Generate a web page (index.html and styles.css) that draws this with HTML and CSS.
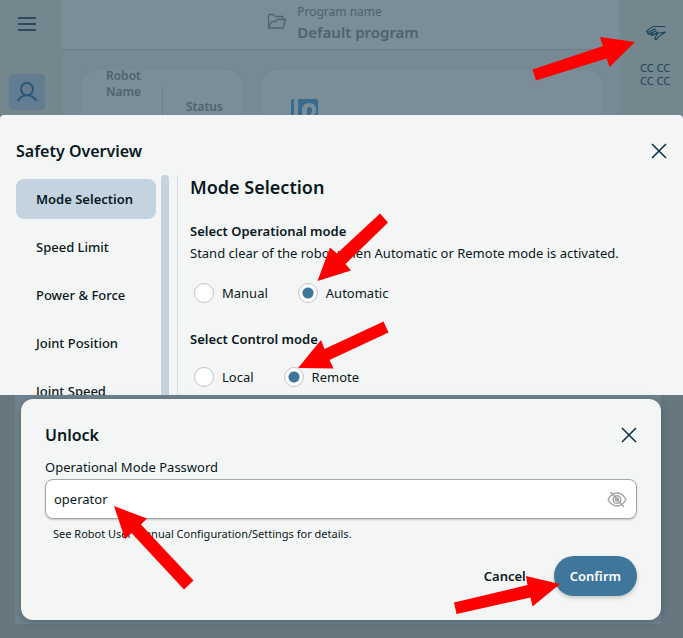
FILE: index.html
```html
<!DOCTYPE html>
<html lang="en">
<head>
  <meta charset="UTF-8">
  <title>Safety Overview</title>
  <meta name="viewport" content="width=device-width, initial-scale=1.0">
  <link rel="stylesheet" href="styles.css">
</head>
<body>
  <div class="page">
    <!-- Dimmed application -->
    <div class="app">
      <nav class="sidebar">
        <button class="icon-button" aria-label="Menu">
          <svg width="20" height="16" viewBox="0 0 20 16"><path d="M1 2h18M1 8h18M1 14h18" stroke="#2a4c5e" stroke-width="2" fill="none"/></svg>
        </button>
        <button class="icon-button user-button" aria-label="Operator">
          <svg width="22" height="20" viewBox="0 0 22 20"><g stroke="#2a5675" stroke-width="2" fill="none"><ellipse cx="11" cy="7" rx="6" ry="6.2"/><path d="M1.500 19C4 15 7 13.300 11 13.300S18 15 20.500 19"/></g></svg>
        </button>
      </nav>

      <div class="main">
        <header class="program">
          <svg class="folder" width="20" height="17" viewBox="0 0 20 17"><path d="M1.500 15V2.500l1-1h4l2 2h7.500v3M1.500 15l3-6.500h4l2-2h8l-2.500 8.500z" stroke="#4f636f" stroke-width="1.300" fill="none" stroke-linejoin="round"/></svg>
          <div>
            <div class="program-label">Program name</div>
            <div class="program-name">Default program</div>
          </div>
        </header>
        <div class="cards">
          <div class="card robot-card">
            <div class="robot-name">Robot Name</div>
            <div class="robot-status">Status</div>
          </div>
          <div class="card logo-card">
            <svg width="28" height="28" viewBox="0 0 28 28"><path d="M3 0h1v28H1V2Q1 0 3 0zM8 0h18q2 0 2 2v26H8z" fill="#376b8f"/><path d="M12 28V12q0-8 7-8t7 7q0 6-6 8v9" fill="#7b8d98"/><path d="M17 28V12q0-4 2.500-4t2.500 3q0 4-3 5v12z" fill="#376b8f"/></svg>
          </div>
        </div>
      </div>

      <aside class="tools">
        <button class="icon-button" aria-label="Freedrive">
          <svg width="22" height="16" viewBox="0 0 22 16"><path d="M20.500 1.500H9.500C6 2 3.500 4 1.500 6.500L3 7.500C6 6.500 7.500 4 11 4M3 7.500V9C6 9 8 7 11.500 5.500M5.500 9.500L7 10.500C9.500 9.500 11 8.500 12.500 7C12.500 10 9.500 12 10 14.500H11.500C13.500 12 14.500 10 17 9.500L20.500 7Z" stroke="#1e4457" stroke-width="1.200" fill="none" stroke-linejoin="round"/></svg>
        </button>
        <div class="checksum">CC CC CC CC</div>
      </aside>
    </div>

    <!-- Safety overview dialog -->
    <section class="safety">
      <div class="dialog-header">
        <h2>Safety Overview</h2>
        <button class="icon-button" aria-label="Close">
          <svg width="16" height="16" viewBox="0 0 16 16"><path d="M1 1l14 14M15 1L1 15" stroke="#0d3447" stroke-width="1.600" fill="none"/></svg>
        </button>
      </div>
      <div class="safety-body">
        <nav class="tabs">
          <button class="tab active">Mode Selection</button>
          <button class="tab">Speed Limit</button>
          <button class="tab">Power &amp; Force</button>
          <button class="tab">Joint Position</button>
          <button class="tab">Joint Speed</button>
        </nav>
        <div class="scrollbar"></div>
        <div class="panel">
          <h1>Mode Selection</h1>
          <h3>Select Operational mode</h3>
          <p>Stand clear of the robot when Automatic or Remote mode is activated.</p>
          <div class="radios">
            <label><input type="radio" name="operational">Manual</label>
            <label><input type="radio" name="operational" checked>Automatic</label>
          </div>
          <h3>Select Control mode</h3>
          <div class="radios control">
            <label><input type="radio" name="control">Local</label>
            <label><input type="radio" name="control" checked>Remote</label>
          </div>
        </div>
      </div>
    </section>

    <!-- Unlock dialog -->
    <section class="backdrop">
      <div class="backdrop-inner">
        <form class="unlock">
          <div class="dialog-header">
            <h2>Unlock</h2>
            <button type="button" class="icon-button" aria-label="Close">
              <svg width="16" height="16" viewBox="0 0 16 16"><path d="M1 1l14 14M15 1L1 15" stroke="#0d3447" stroke-width="1.600" fill="none"/></svg>
            </button>
          </div>
          <label class="field-label" for="password">Operational Mode Password</label>
          <div class="field">
            <input type="text" id="password" value="operator">
            <button type="button" class="icon-button" aria-label="Hide password">
              <svg width="20" height="17" viewBox="0 0 20 17"><g stroke="#a5a5a5" stroke-width="1.400" fill="none"><path d="M1 8.500Q4.500 2 10 2t9 6.500Q15.500 15 10 15T1 8.500z"/><circle cx="10" cy="8.500" r="3.800"/><circle cx="10" cy="8.500" r="1.500"/><path d="M3.500 1L17 16"/></g></svg>
            </button>
          </div>
          <p class="hint">See Robot User Manual Configuration/Settings for details.</p>
          <div class="actions">
            <button type="button" class="cancel">Cancel</button>
            <button type="button" class="confirm">Confirm</button>
          </div>
        </form>
      </div>
    </section>

    <!-- Step arrows -->
    <svg class="arrows" width="683" height="638" viewBox="0 0 683 638" fill="#ff0000">
      <path d="M532.500 69.500L603 46L600 37L635 42L609.500 67L606.500 58.500L536 80.500z"/>
      <path d="M380 213.500L388 222.500L345.500 264L351 270.500L317.500 281L330 247.500L337 253.500z"/>
      <path d="M383.500 321.500L388.500 332.500L329.500 360L333.500 368.500L298 368L321 340L324.500 349z"/>
      <path d="M114 506L147 518.500L141 524.500L193.500 580.500L184 589.500L131.500 533L125 539z"/>
      <path d="M454 602.500L527.500 585L526 576L560 584L532.500 606.500L530.500 597.500L456.500 614z"/>
    </svg>
  </div>
</body>
</html>
```

FILE: styles.css
```css
* {
  box-sizing: border-box;
}

body {
  margin: 0;
  background: #677780;
  color: #0a1820;
  font-family: "Noto Sans", sans-serif;
  font-size: 13px;
  line-height: 20px;
}

h1, h2, h3, p {
  margin: 0;
}

button, input {
  font-family: inherit;
  font-size: inherit;
  color: inherit;
}

svg {
  display: block;
}

.page {
  position: relative;
}

.icon-button {
  display: flex;
  padding: 0;
  border: 0;
  background: none;
  cursor: pointer;
}

/* Dimmed application */
.app {
  display: flex;
  height: 115px;
  overflow: hidden;
  background: #778995;
  color: #4f626d;
}

.sidebar {
  display: flex;
  flex-direction: column;
  align-items: center;
  gap: 42px;
  width: 62px;
  padding: 16px 8px 0 0;
  background: #74868e;
}

.user-button {
  align-items: center;
  justify-content: center;
  width: 36px;
  height: 36px;
  flex-shrink: 0;
  border-radius: 4px;
  background: #627d92;
}

.main {
  flex: 1;
}

.program {
  display: flex;
  justify-content: center;
  gap: 10px;
  height: 50px;
  padding: 2px 0 0 4px;
  border-bottom: 1px solid #6b7d88;
  background: #7b8d98;
}

.folder {
  margin-top: 11px;
}

.program-label {
  font-size: 12px;
}

.program-name {
  font-size: 15px;
  font-weight: 600;
}

.cards {
  display: flex;
  gap: 20px;
  padding: 20px 18px 0 20px;
}

.card {
  height: 80px;
  border-radius: 14px;
  background: #7b8d98;
  box-shadow: 0 0 2px #6f818c;
}

.robot-card {
  display: flex;
  width: 160px;
  font-size: 12px;
  font-weight: 600;
  line-height: 16px;
}

.robot-name {
  width: 81px;
  padding: 0 16px 0 24px;
  margin-top: -2px;
  background: linear-gradient(#6b7d88, #6b7d88) right 18px / 1px 100% no-repeat;
}

.robot-status {
  padding: 29px 0 0 23px;
}

.logo-card {
  flex: 1;
  padding: 29px 28px;
}

.tools {
  display: flex;
  flex-direction: column;
  align-items: center;
  gap: 20px;
  width: 63px;
  padding: 25px 0 0 9px;
  background: #74868e;
  box-shadow: 0 0 2px #6f818c;
  color: #1e4457;
}

.checksum {
  width: 32px;
  font-size: 11px;
  line-height: 13px;
}

/* Dialogs */
.dialog-header {
  display: flex;
  align-items: center;
  justify-content: space-between;
}

.dialog-header h2 {
  font-size: 16px;
  font-weight: 600;
  line-height: 24px;
}

.safety {
  height: 280px;
  padding: 24px 16px 0;
  overflow: hidden;
  border-radius: 4px 4px 0 0;
  background: #f4f6f6;
}

.safety-body {
  display: flex;
  margin-top: 12px;
}

.tabs {
  display: flex;
  flex-direction: column;
  gap: 8px;
  width: 140px;
  padding-top: 4px;
}

.tab {
  height: 40px;
  padding: 0 20px;
  border: 0;
  border-radius: 8px;
  background: none;
  font-weight: 500;
  text-align: left;
  cursor: pointer;
}

.tab.active {
  background: #c3d4e0;
  font-weight: 600;
}

.scrollbar {
  width: 8px;
  margin-left: 5px;
  border-radius: 4px;
  background: #c3d4e0;
}

.panel {
  flex: 1;
  margin-left: 8px;
  padding-left: 12px;
  border-left: 1px solid #d9dddf;
}

.panel h1 {
  margin-bottom: 22px;
  font-size: 18px;
  font-weight: 600;
  line-height: 24px;
}

.panel h3 {
  margin-bottom: 2px;
  font-size: 13px;
  font-weight: 600;
  line-height: 20px;
}

.radios {
  display: flex;
  gap: 30px;
  margin: 20px 0 26px 4px;
}

.radios.control {
  margin-top: 18px;
}

.radios label {
  display: flex;
  align-items: center;
  gap: 8px;
}

.radios input {
  width: 20px;
  height: 20px;
  margin: 0;
  appearance: none;
  border: 1px solid #c2c5c6;
  border-radius: 50%;
  background: #ffffff;
}

.radios input:checked {
  background: radial-gradient(circle, #3e769c 5px, #ffffff 6px);
}

/* Unlock dialog */
.backdrop {
  padding: 0 22px 14px 15px;
  background: #677780;
}

.backdrop-inner {
  padding: 4px 0 4px 6px;
  background: #71838e;
}

.unlock {
  padding: 24px;
  border-radius: 12px;
  background: #f4f6f6;
  box-shadow: 0 2px 8px rgba(40, 55, 65, 0.4);
}

.field-label {
  display: block;
  margin-top: 10px;
  line-height: 20px;
}

.field {
  display: flex;
  align-items: center;
  height: 40px;
  margin-top: 2px;
  padding: 0 9px 0 8px;
  border: 1px solid #a5a8a9;
  border-radius: 8px;
  background: #ffffff;
  box-shadow: 0 1px 2px rgba(0, 0, 0, 0.2);
}

.field input {
  flex: 1;
  min-width: 0;
  padding: 0;
  border: 0;
  outline: none;
  background: none;
}

.hint {
  margin: 5px 8px 0;
  font-size: 11px;
}

.actions {
  display: flex;
  align-items: center;
  justify-content: flex-end;
  gap: 28px;
  margin-top: 12px;
}

.cancel, .confirm {
  height: 40px;
  padding: 0;
  border: 0;
  background: none;
  font-weight: 600;
  cursor: pointer;
}

.confirm {
  padding: 0 16px;
  border-radius: 20px;
  background: #3e769c;
  box-shadow: 0 2px 4px rgba(0, 0, 0, 0.2);
  color: #ffffff;
}

/* Arrows pointing at the controls */
.arrows {
  position: absolute;
  top: 0;
  left: 0;
  pointer-events: none;
}
```
